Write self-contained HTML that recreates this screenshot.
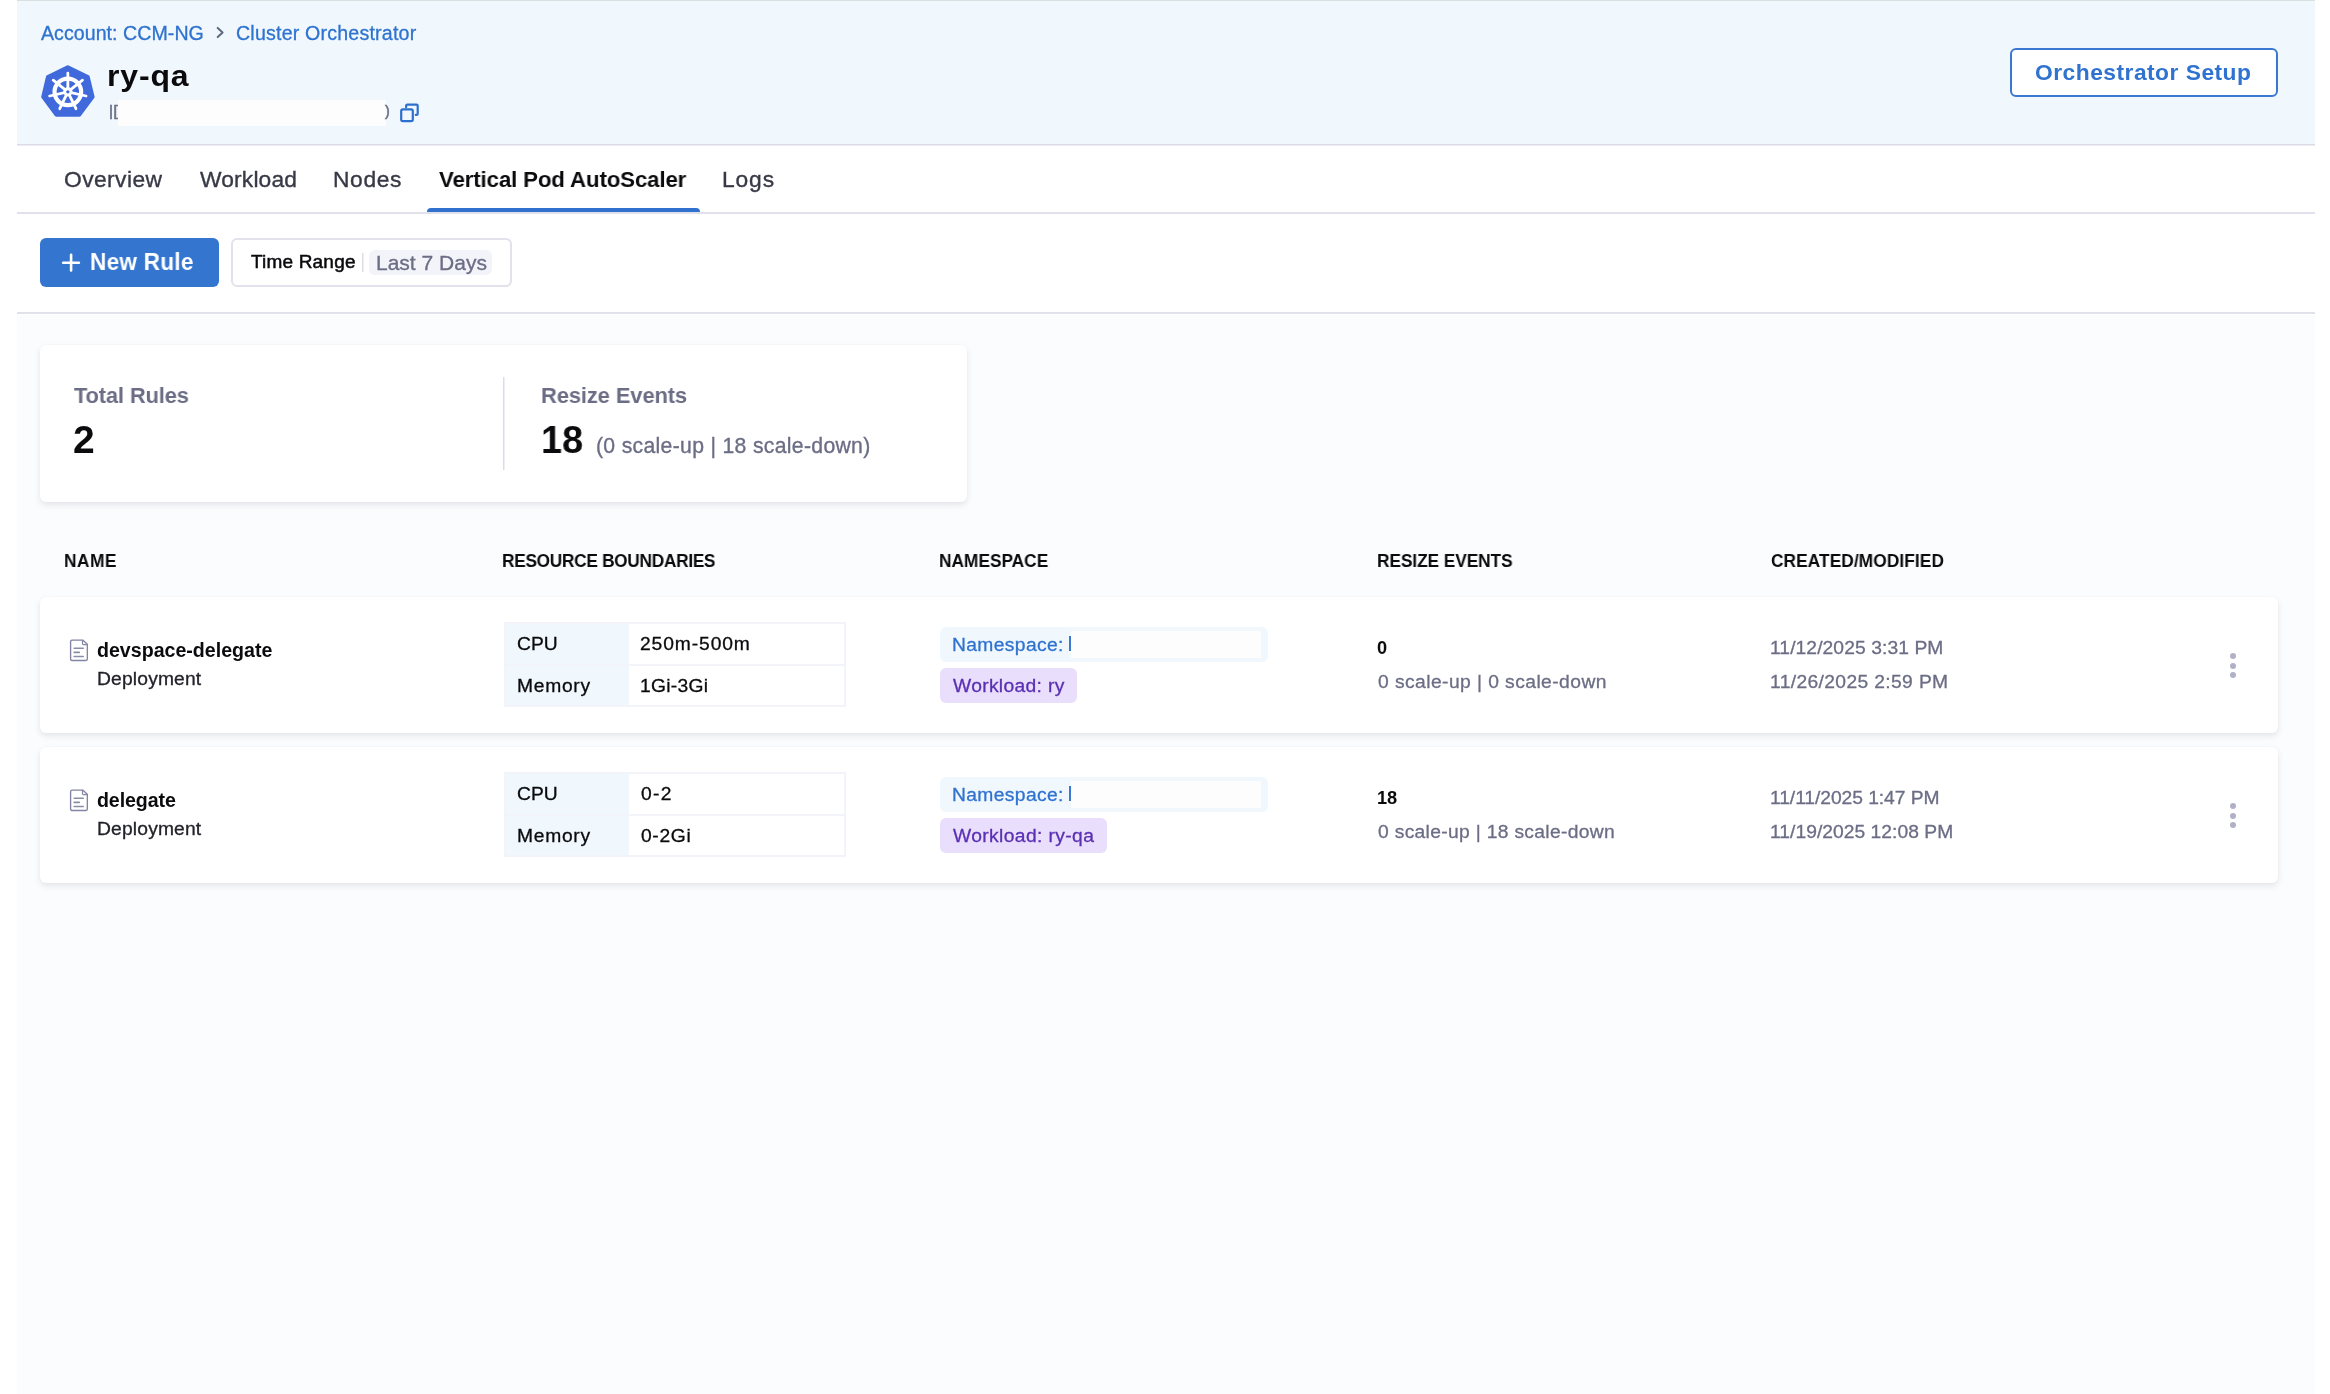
<!DOCTYPE html>
<html>
<head>
<meta charset="utf-8">
<title>Cluster Orchestrator - Vertical Pod AutoScaler</title>
<style>
*{box-sizing:border-box;margin:0;padding:0}
html,body{width:2330px;height:1394px;overflow:hidden;background:#fff}
body{font-family:"Liberation Sans",sans-serif;color:#0b0b0d;position:relative}
.a{position:absolute}
.t{position:absolute;white-space:nowrap;line-height:1;will-change:transform}
.b{font-weight:bold}
#page{position:absolute;left:17px;top:0;width:2298px;height:1394px;background:#fbfcfe;overflow:hidden}
#hdr{left:0;top:0;width:2298px;height:146px;background:#f0f8fd;border-top:1px solid #dcdfe0;border-bottom:1px solid #ececf3;box-shadow:inset 0 -1px 0 #dadbe6}
#tabs{left:0;top:146px;width:2298px;height:68px;background:#fff;border-bottom:2px solid #e1e1eb}
#tool{left:0;top:214px;width:2298px;height:101px;background:#fff;border-bottom:1px solid #fff;box-shadow:inset 0 -2px 0 #e1e1eb}
.card{position:absolute;background:#fff;border-radius:6px;box-shadow:0 0 1.6px rgba(40,41,61,0.04),0 3px 6px rgba(96,97,112,0.14)}
.rt{position:absolute;width:342px;height:85px;border:2px solid #f3f3fa;background:#fff}
.rt i{position:absolute;left:0;top:0;width:123px;height:81px;background:#f0f8fd}
.rt b{position:absolute;left:0;top:40px;width:338px;height:2px;background:#f3f3fa}
.pill{position:absolute;border-radius:6px}
.dot{position:absolute;width:6.4px;height:6.4px;border-radius:50%;background:#b0b1c6}
</style>
</head>
<body>
<div id="page">
  <div id="hdr" class="a"></div>
  <div id="tabs" class="a"></div>
  <div id="tool" class="a"></div>

  <!-- header pieces -->
  <svg class="a" style="left:199px;top:25px" width="9" height="14" viewBox="0 0 9 14"><path d="M1.7 2.9 L6.6 7.5 L1.7 12.1" fill="none" stroke="#5f6b7c" stroke-width="2" stroke-linecap="round" stroke-linejoin="round"/></svg>
  <svg id="k8s" class="a" style="left:23px;top:64px" width="56" height="54" viewBox="0 0 56 54">
    <polygon points="27.77,3.32 47.82,13.13 52.62,32.88 39.20,50.72 16.50,50.72 3.18,32.88 7.88,13.13" fill="#4069dc" stroke="#4069dc" stroke-width="4" stroke-linejoin="round"/>
    <circle cx="27.85" cy="27.85" r="13.3" fill="none" stroke="#fff" stroke-width="4.2"/>
    <path d="M27.85 27.85 L27.85 9.15 M27.85 27.85 L42.47 16.19 M27.85 27.85 L46.08 32.01 M27.85 27.85 L35.96 44.70 M27.85 27.85 L19.74 44.70 M27.85 27.85 L9.62 32.01 M27.85 27.85 L13.23 16.19" stroke="#fff" stroke-width="2.8" stroke-linecap="round" fill="none"/>
    <circle cx="27.85" cy="27.85" r="4.6" fill="#fff"/>
    <circle cx="27.85" cy="27.85" r="1.7" fill="#4069dc"/>
  </svg>
  <div class="a" style="left:101px;top:100px;width:268px;height:26px;background:#fdfdfd"></div>
  <svg class="a" style="left:382px;top:102px" width="22" height="22" viewBox="0 0 22 22"><path d="M7.1 5.2 V3.9 Q7.1 2.7 8.3 2.7 H17.5 Q18.7 2.7 18.7 3.9 V11.7 Q18.7 12.9 17.5 12.9 H16.8" fill="none" stroke="#2d6fce" stroke-width="2.2" stroke-linecap="round"/><rect x="2.2" y="7.4" width="11.6" height="11.8" rx="1.6" fill="none" stroke="#2d6fce" stroke-width="2.2"/></svg>
  <div class="a" style="left:1993px;top:48px;width:268px;height:49px;border:2px solid #3a78d1;border-radius:6px;background:#fff"></div>

  <!-- active tab underline -->
  <div class="a" style="left:409.5px;top:208px;width:273.5px;height:4px;background:#3070cf;border-radius:4px 4px 0 0"></div>

  <!-- toolbar -->
  <div class="a" style="left:23px;top:238px;width:179px;height:49px;background:#3476cf;border-radius:6px"></div>
  <svg class="a" style="left:44px;top:253px" width="20" height="20" viewBox="0 0 20 20"><path d="M10.1 1.7 V17.5 M2.2 9.8 H17.9" stroke="#fff" stroke-width="2.6" stroke-linecap="round" fill="none"/></svg>
  <div class="a" style="left:214px;top:238px;width:281px;height:49px;background:#fff;border:2px solid #e1e2eb;border-radius:6px"></div>
  <div class="a" style="left:345px;top:253px;width:2px;height:19px;background:linear-gradient(90deg,#dbdce6 50%,#eeeff4 50%)"></div>
  <div class="a" style="left:352px;top:250px;width:123px;height:25px;background:#f3f3fa;border-radius:6px"></div>

  <!-- summary card -->
  <div class="card" style="left:23px;top:345px;width:927px;height:157px"></div>
  <div class="a" style="left:486px;top:377px;width:2px;height:93px;background:linear-gradient(90deg,#dbdce6 50%,#eeeff4 50%)"></div>

  <!-- rows -->
  <div class="card" style="left:23px;top:597px;width:2238px;height:136px"></div>
  <div class="card" style="left:23px;top:747px;width:2238px;height:136px"></div>
<svg class="a" style="left:52px;top:638px" width="20" height="24" viewBox="0 0 20 24"><path d="M3 2.05 H13.7 L18.35 6.3 V21 Q18.35 22.45 16.9 22.45 H3 Q1.6 22.45 1.6 21 V3.5 Q1.6 2.05 3 2.05 Z" fill="#fff" stroke="#8284a2" stroke-width="1.35" stroke-linejoin="round"/><path d="M13.5 2.6 V5.5 Q13.5 6.6 14.6 6.6 H17.8" fill="none" stroke="#8284a2" stroke-width="1.2"/><path d="M5.2 10.2 H14.2 M5.2 14.4 H10.3 M5.2 18.5 H14.2" stroke="#8a8ca8" stroke-width="1.6" stroke-linecap="round"/></svg>
<div class="rt" style="left:487px;top:622px"><i></i><b></b></div>
<div class="pill" style="left:923px;top:627px;width:328px;height:35px;background:#f0f8fd"></div>
<div class="a" style="left:1054px;top:631px;width:190px;height:27px;background:#fdfdfd"></div>
<div class="a" style="left:1051.5px;top:636px;width:2.5px;height:15px;background:#3a78d1"></div>
<div class="pill" style="left:923px;top:668px;width:136.5px;height:35px;background:#e9defb"></div>
<div class="dot" style="left:2212.5px;top:653.1px"></div>
<div class="dot" style="left:2212.5px;top:662.6px"></div>
<div class="dot" style="left:2212.5px;top:672.0px"></div>
<svg class="a" style="left:52px;top:788px" width="20" height="24" viewBox="0 0 20 24"><path d="M3 2.05 H13.7 L18.35 6.3 V21 Q18.35 22.45 16.9 22.45 H3 Q1.6 22.45 1.6 21 V3.5 Q1.6 2.05 3 2.05 Z" fill="#fff" stroke="#8284a2" stroke-width="1.35" stroke-linejoin="round"/><path d="M13.5 2.6 V5.5 Q13.5 6.6 14.6 6.6 H17.8" fill="none" stroke="#8284a2" stroke-width="1.2"/><path d="M5.2 10.2 H14.2 M5.2 14.4 H10.3 M5.2 18.5 H14.2" stroke="#8a8ca8" stroke-width="1.6" stroke-linecap="round"/></svg>
<div class="rt" style="left:487px;top:772px"><i></i><b></b></div>
<div class="pill" style="left:923px;top:777px;width:328px;height:35px;background:#f0f8fd"></div>
<div class="a" style="left:1054px;top:781px;width:190px;height:27px;background:#fdfdfd"></div>
<div class="a" style="left:1051.5px;top:786px;width:2.5px;height:15px;background:#3a78d1"></div>
<div class="pill" style="left:923px;top:818px;width:167px;height:35px;background:#e9defb"></div>
<div class="dot" style="left:2212.5px;top:803.1px"></div>
<div class="dot" style="left:2212.5px;top:812.6px"></div>
<div class="dot" style="left:2212.5px;top:822.0px"></div>
<span class="t" style="left:24.22px;top:24.01px;font-size:19.6px;color:#2f72cf;letter-spacing:0.043px;-webkit-text-stroke:0.31px #2f72cf;">Account: CCM-NG</span>
<span class="t" style="left:218.92px;top:24.01px;font-size:19.6px;color:#2f72cf;letter-spacing:0.200px;-webkit-text-stroke:0.31px #2f72cf;">Cluster Orchestrator</span>
<span class="t b" style="left:90.42px;top:61.04px;font-size:29.6px;color:#0b0b0d;letter-spacing:0.787px;transform:scaleX(1.08);transform-origin:0 0;">ry-qa</span>
<span class="t" style="left:91.79px;top:103.13px;font-size:15.2px;color:#6b6d85;letter-spacing:0.600px;-webkit-text-stroke:0.60px #6b6d85;">|[</span>
<span class="t" style="left:367.75px;top:103.88px;font-size:14.2px;color:#6b6d85;-webkit-text-stroke:0.50px #6b6d85;">)</span>
<span class="t b" style="left:2018.03px;top:61.20px;font-size:22.8px;color:#2f72cf;letter-spacing:0.482px;">Orchestrator Setup</span>
<span class="t" style="left:46.83px;top:167.90px;font-size:22.8px;color:#383946;letter-spacing:0.429px;-webkit-text-stroke:0.36px #383946;">Overview</span>
<span class="t" style="left:183.43px;top:167.90px;font-size:22.8px;color:#383946;letter-spacing:0.157px;-webkit-text-stroke:0.36px #383946;">Workload</span>
<span class="t" style="left:316.33px;top:167.90px;font-size:22.8px;color:#383946;letter-spacing:0.650px;-webkit-text-stroke:0.36px #383946;">Nodes</span>
<span class="t b" style="left:422.23px;top:167.82px;font-size:22.9px;color:#0b0b0d;letter-spacing:-0.112px;transform:scaleX(0.97);transform-origin:0 0;">Vertical Pod AutoScaler</span>
<span class="t" style="left:705.43px;top:167.90px;font-size:22.8px;color:#383946;letter-spacing:0.867px;-webkit-text-stroke:0.36px #383946;">Logs</span>
<span class="t b" style="left:72.82px;top:250.93px;font-size:23.0px;color:#ffffff;letter-spacing:0.277px;transform:scaleX(0.98);transform-origin:0 0;">New Rule</span>
<span class="t" style="left:234.10px;top:253.01px;font-size:18.3px;color:#0b0b0d;letter-spacing:0.171px;-webkit-text-stroke:0.50px #0b0b0d;transform:scaleX(1.04);transform-origin:0 0;">Time Range</span>
<span class="t" style="left:359.14px;top:252.42px;font-size:21.0px;color:#6b6d85;-webkit-text-stroke:0.34px #6b6d85;">Last 7 Days</span>
<span class="t b" style="left:56.83px;top:383.90px;font-size:22.8px;color:#6b6d85;letter-spacing:-0.156px;transform:scaleX(0.96);transform-origin:0 0;">Total Rules</span>
<span class="t b" style="left:55.66px;top:419.99px;font-size:39px;color:#0b0b0d;">2</span>
<span class="t b" style="left:523.93px;top:383.90px;font-size:22.8px;color:#6b6d85;letter-spacing:-0.087px;transform:scaleX(0.96);transform-origin:0 0;">Resize Events</span>
<span class="t b" style="left:523.56px;top:419.99px;font-size:39px;color:#0b0b0d;transform:scaleX(0.97);transform-origin:0 0;">18</span>
<span class="t" style="left:578.73px;top:435.05px;font-size:21.2px;color:#6b6d85;letter-spacing:0.315px;-webkit-text-stroke:0.34px #6b6d85;">(0 scale-up | 18 scale-down)</span>
<span class="t b" style="left:47.10px;top:551.72px;font-size:18.4px;color:#0b0b0d;letter-spacing:0.567px;transform:scaleX(0.94);transform-origin:0 0;">NAME</span>
<span class="t b" style="left:484.80px;top:551.72px;font-size:18.4px;color:#0b0b0d;letter-spacing:-0.325px;transform:scaleX(0.94);transform-origin:0 0;">RESOURCE BOUNDARIES</span>
<span class="t b" style="left:922.20px;top:551.72px;font-size:18.4px;color:#0b0b0d;transform:scaleX(0.94);transform-origin:0 0;">NAMESPACE</span>
<span class="t b" style="left:1359.90px;top:551.72px;font-size:18.4px;color:#0b0b0d;letter-spacing:-0.071px;transform:scaleX(0.94);transform-origin:0 0;">RESIZE EVENTS</span>
<span class="t b" style="left:1753.60px;top:551.72px;font-size:18.4px;color:#0b0b0d;letter-spacing:0.092px;transform:scaleX(0.94);transform-origin:0 0;">CREATED/MODIFIED</span>
<span class="t b" style="left:80.02px;top:640.71px;font-size:19.6px;color:#0b0b0d;">devspace-delegate</span>
<span class="t" style="left:80.08px;top:670.37px;font-size:18.7px;color:#22222a;letter-spacing:0.162px;-webkit-text-stroke:0.30px #22222a;transform:scaleX(1.03);transform-origin:0 0;">Deployment</span>
<span class="t" style="left:499.68px;top:634.77px;font-size:18.7px;color:#0b0b0d;-webkit-text-stroke:0.30px #0b0b0d;transform:scaleX(1.03);transform-origin:0 0;">CPU</span>
<span class="t" style="left:623.28px;top:634.77px;font-size:18.7px;color:#0b0b0d;letter-spacing:0.874px;-webkit-text-stroke:0.30px #0b0b0d;transform:scaleX(1.03);transform-origin:0 0;">250m-500m</span>
<span class="t" style="left:499.68px;top:676.97px;font-size:18.7px;color:#0b0b0d;letter-spacing:0.699px;-webkit-text-stroke:0.30px #0b0b0d;transform:scaleX(1.03);transform-origin:0 0;">Memory</span>
<span class="t" style="left:623.28px;top:676.97px;font-size:18.7px;color:#0b0b0d;letter-spacing:0.291px;-webkit-text-stroke:0.30px #0b0b0d;transform:scaleX(1.03);transform-origin:0 0;">1Gi-3Gi</span>
<span class="t" style="left:934.98px;top:635.57px;font-size:18.7px;color:#2f72cf;letter-spacing:0.367px;-webkit-text-stroke:0.30px #2f72cf;transform:scaleX(1.03);transform-origin:0 0;">Namespace:</span>
<span class="t" style="left:936.08px;top:676.97px;font-size:18.7px;color:#5a2fb3;letter-spacing:0.318px;-webkit-text-stroke:0.30px #5a2fb3;transform:scaleX(1.03);transform-origin:0 0;">Workload: ry</span>
<span class="t b" style="left:1359.91px;top:639.19px;font-size:18.2px;color:#0b0b0d;">0</span>
<span class="t" style="left:1360.88px;top:672.97px;font-size:18.7px;color:#6b6d85;letter-spacing:0.425px;-webkit-text-stroke:0.30px #6b6d85;transform:scaleX(1.03);transform-origin:0 0;">0 scale-up | 0 scale-down</span>
<span class="t" style="left:1752.98px;top:639.07px;font-size:18.7px;color:#6b6d85;letter-spacing:0.080px;-webkit-text-stroke:0.30px #6b6d85;transform:scaleX(1.03);transform-origin:0 0;">11/12/2025 3:31 PM</span>
<span class="t" style="left:1752.98px;top:672.57px;font-size:18.7px;color:#6b6d85;letter-spacing:0.354px;-webkit-text-stroke:0.30px #6b6d85;transform:scaleX(1.03);transform-origin:0 0;">11/26/2025 2:59 PM</span>
<span class="t b" style="left:80.02px;top:790.71px;font-size:19.6px;color:#0b0b0d;letter-spacing:-0.100px;">delegate</span>
<span class="t" style="left:80.08px;top:820.37px;font-size:18.7px;color:#22222a;letter-spacing:0.162px;-webkit-text-stroke:0.30px #22222a;transform:scaleX(1.03);transform-origin:0 0;">Deployment</span>
<span class="t" style="left:499.68px;top:784.77px;font-size:18.7px;color:#0b0b0d;-webkit-text-stroke:0.30px #0b0b0d;transform:scaleX(1.03);transform-origin:0 0;">CPU</span>
<span class="t" style="left:624.08px;top:784.77px;font-size:18.7px;color:#0b0b0d;letter-spacing:1.262px;-webkit-text-stroke:0.30px #0b0b0d;transform:scaleX(1.03);transform-origin:0 0;">0-2</span>
<span class="t" style="left:499.68px;top:826.97px;font-size:18.7px;color:#0b0b0d;letter-spacing:0.699px;-webkit-text-stroke:0.30px #0b0b0d;transform:scaleX(1.03);transform-origin:0 0;">Memory</span>
<span class="t" style="left:624.08px;top:826.97px;font-size:18.7px;color:#0b0b0d;letter-spacing:0.631px;-webkit-text-stroke:0.30px #0b0b0d;transform:scaleX(1.03);transform-origin:0 0;">0-2Gi</span>
<span class="t" style="left:934.98px;top:785.57px;font-size:18.7px;color:#2f72cf;letter-spacing:0.367px;-webkit-text-stroke:0.30px #2f72cf;transform:scaleX(1.03);transform-origin:0 0;">Namespace:</span>
<span class="t" style="left:936.08px;top:826.97px;font-size:18.7px;color:#5a2fb3;letter-spacing:0.374px;-webkit-text-stroke:0.30px #5a2fb3;transform:scaleX(1.03);transform-origin:0 0;">Workload: ry-qa</span>
<span class="t b" style="left:1359.91px;top:789.19px;font-size:18.2px;color:#0b0b0d;">18</span>
<span class="t" style="left:1360.88px;top:822.97px;font-size:18.7px;color:#6b6d85;letter-spacing:0.311px;-webkit-text-stroke:0.30px #6b6d85;transform:scaleX(1.03);transform-origin:0 0;">0 scale-up | 18 scale-down</span>
<span class="t" style="left:1752.98px;top:789.07px;font-size:18.7px;color:#6b6d85;letter-spacing:-0.057px;-webkit-text-stroke:0.30px #6b6d85;transform:scaleX(1.03);transform-origin:0 0;">11/11/2025 1:47 PM</span>
<span class="t" style="left:1752.98px;top:822.57px;font-size:18.7px;color:#6b6d85;letter-spacing:0.032px;-webkit-text-stroke:0.30px #6b6d85;transform:scaleX(1.03);transform-origin:0 0;">11/19/2025 12:08 PM</span>
</div>
</body>
</html>
